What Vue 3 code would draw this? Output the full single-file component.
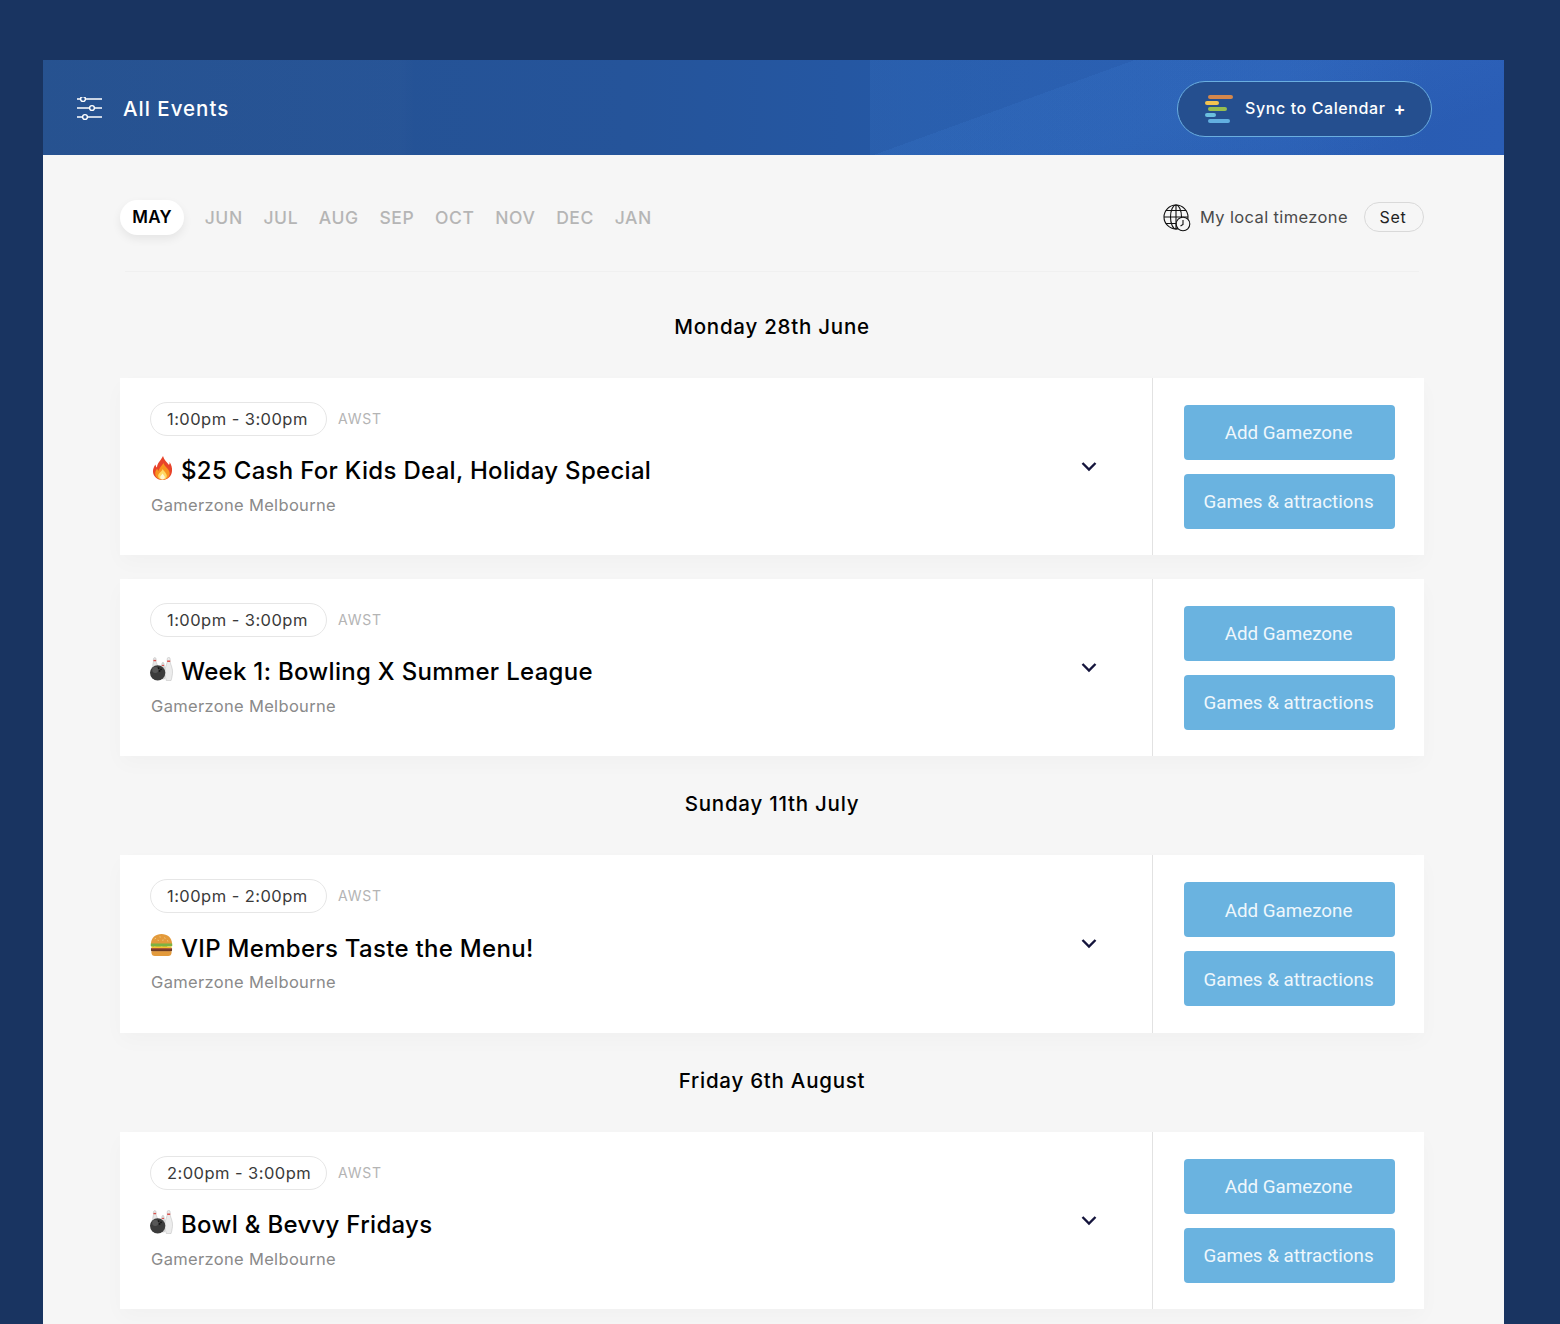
<script setup>
const months = ['JUN', 'JUL', 'AUG', 'SEP', 'OCT', 'NOV', 'DEC', 'JAN']
const groups = [
  { date: 'Monday 28th June', events: [
    { time: '1:00pm - 3:00pm', icon: 'fire', title: '$25 Cash For Kids Deal, Holiday Special' },
    { time: '1:00pm - 3:00pm', icon: 'bowl', title: 'Week 1: Bowling X Summer League' },
  ] },
  { date: 'Sunday 11th July', events: [
    { time: '1:00pm - 2:00pm', icon: 'burger', title: 'VIP Members Taste the Menu!' },
  ] },
  { date: 'Friday 6th August', events: [
    { time: '2:00pm - 3:00pm', icon: 'bowl', title: 'Bowl & Bevvy Fridays' },
  ] },
]
</script>

<template>
  <div class="page">
    <main class="panel">
      <header class="hero">
        <div class="hero-title">
          <svg class="sliders" width="26" height="24" viewBox="0 0 26 24" fill="none" stroke="#fff" stroke-width="1.400">
            <path d="M1 2H4.500M9.500 2H26M1 11H13.500M18.500 11H26M1 20H6.500M11.500 20H26" />
            <circle cx="7" cy="2" r="2.400" />
            <circle cx="16" cy="11" r="2.400" />
            <circle cx="9" cy="20" r="2.400" />
          </svg>
          <h1>All Events</h1>
        </div>
        <button class="sync">
          <span class="bars" aria-hidden="true">
            <i class="bar b1"></i><i class="bar b2"></i><i class="bar b3"></i><i class="bar b4"></i><i class="bar b5"></i>
          </span>
          <span class="sync-label">Sync to Calendar</span>
          <span class="plus">+</span>
        </button>
      </header>

      <section class="content">
        <div class="toolbar">
          <nav class="months">
            <span class="month active">MAY</span>
            <span v-for="m in months" :key="m" class="month">{{ m }}</span>
          </nav>
          <div class="tz">
            <svg width="28" height="28" viewBox="0 0 28 28" fill="none" stroke="#111" stroke-width="1.100">
              <circle cx="13" cy="13" r="12" />
              <ellipse cx="13" cy="13" rx="5.500" ry="12" />
              <path d="M13 1V25M1 13H25M2.800 6.500H23.200M2.800 19.500H23.200" />
              <circle cx="20" cy="20" r="6.800" fill="#f6f6f6" />
              <path d="M20 16V20.500L17.500 22" />
            </svg>
            <span class="tz-label">My local timezone</span>
            <button class="set">Set</button>
          </div>
        </div>
        <div class="rule"></div>

        <div v-for="g in groups" :key="g.date" class="group">
          <h2>{{ g.date }}</h2>
          <article v-for="e in g.events" :key="e.title" class="card">
            <div class="info">
              <div class="details">
                <div class="time-row">
                  <span class="time">{{ e.time }}</span>
                  <span class="zone">AWST</span>
                </div>
                <h3>
                  <svg v-if="e.icon === 'fire'" class="emoji" viewBox="0 0 23 24">
                    <path fill="#e8432a" d="M13 0C14 4 17 6 19 9C19.600 8 19.800 7 19.600 6C21.500 9 22.300 12 22 15C21.600 20.500 17.500 24 12.500 24C7.500 24 3.400 20.500 3 16C2.800 13 4 10.500 5.500 8.500C5.700 10 6.200 11 7 11.500C7 7 11 4.500 13 0Z" />
                    <path fill="#f8931f" d="M13.500 7C14.500 10.500 18.500 12.500 19.500 16C20.500 20 17.500 23.600 12.500 23.600C8 23.600 5 20.800 5.200 17C5.300 15.200 6.200 13.800 7.200 12.800C7.500 13.800 8 14.500 8.800 15C8.800 12 12 10 13.500 7Z" />
                    <path fill="#ffd964" d="M12.800 13C13.800 15.500 16.800 17 16.800 20C16.800 22.300 15 23.600 12.500 23.600C10 23.600 8.200 22.200 8.200 20C8.200 17 11.500 16 12.800 13Z" />
                    <path fill="#fff6cf" d="M12.500 17.500C13.400 19 14.800 19.800 14.800 21.200C14.800 22.600 13.800 23.400 12.500 23.400C11.200 23.400 10.200 22.600 10.200 21.200C10.200 19.800 11.800 19 12.500 17.500Z" />
                  </svg>
                  <svg v-else-if="e.icon === 'bowl'" class="emoji" viewBox="0 0 24 25">
                    <path fill="#dcdcdc" stroke="#aaa" stroke-width=".4" d="M13.500 5.500C14.800 5.500 14.800 8 15 10C15.500 14 16 18 15 23H12C11 18 11.500 14 12 10C12.200 8 12.200 5.500 13.500 5.500Z" />
                    <path fill="#d9534f" d="M12.300 8.200H14.700V9.400H12.300Z" />
                    <path fill="#ececec" stroke="#aaa" stroke-width=".4" d="M19.500 0.300C21.300 0.300 21.300 3 21 5C21.600 8 24 12 23.500 17C23.300 20 22.500 22.500 22 24.500H17C16.500 22.500 15.700 20 15.500 17C15 12 17.500 8 18 5C17.700 3 17.700 0.300 19.500 0.300Z" />
                    <path fill="#d9534f" d="M17.900 3.600H21.100V5.200H17.900Z" />
                    <path fill="#e6e6e6" stroke="#aaa" stroke-width=".4" d="M5 0.500C6.600 0.500 6.700 3 6.300 4.500C6.800 6.500 8 8 8 11L3 11C2.500 8.500 3.300 6.500 3.700 4.500C3.300 3 3.400 0.500 5 0.500Z" />
                    <path fill="#d9534f" d="M3.600 3H6.400V4.400H3.600Z" />
                    <circle cx="8" cy="16.500" r="8" fill="#3b3b3b" />
                    <circle cx="5.500" cy="13.500" r="3.200" fill="#6a6a6a" opacity=".6" />
                    <circle cx="9" cy="11.500" r=".9" fill="#111" /><circle cx="11.500" cy="12.800" r=".9" fill="#111" /><circle cx="10" cy="14.500" r=".9" fill="#111" />
                  </svg>
                  <svg v-else class="emoji" viewBox="0 0 24 24">
                    <path fill="#e39a3b" d="M1 11C1 4 6 0.500 12 0.500C18 0.500 23 4 23 11Z" />
                    <path fill="none" stroke="#f6d79a" stroke-width="1" d="M5 5.500L6 5M10 3.500L11 3.700M15 4.500L16 5M8 7L9 7.200M13 7L14 6.800M18 7.500L19 8" />
                    <path fill="#7cb342" d="M0.800 10.500H23.200V13C21 14.300 19.500 13.200 17.500 14C15 14.800 13 13.500 11 14C8 14.800 6 13.500 4 14C2.500 14.300 1.500 13.800 0.800 13Z" />
                    <path fill="#f9c22e" d="M1.500 13.500H22.500V15.500L14 16.500L11 18L8 16.500L1.500 15.800Z" />
                    <path fill="#6b3a22" d="M1 15.500H23V17.500C23 18.500 22 19 21 19H3C2 19 1 18.500 1 17.500Z" />
                    <path fill="#d9534f" d="M1.500 15.500H22.500V16.500H1.500Z" opacity=".6" />
                    <path fill="#e39a3b" d="M1.500 18.500H22.500V20C22.500 22 21 23.500 19 23.500H5C3 23.500 1.500 22 1.500 20Z" />
                  </svg>
                  <span>{{ e.title }}</span>
                </h3>
                <p class="venue">Gamerzone Melbourne</p>
              </div>
              <svg class="chevron" width="16" height="11" viewBox="0 0 16 11" fill="none" stroke="#14143c" stroke-width="2.400">
                <path d="M1.500 2L8 8.500L14.500 2" />
              </svg>
            </div>
            <div class="actions">
              <button class="cta">Add Gamezone</button>
              <button class="cta">Games &amp; attractions</button>
            </div>
          </article>
        </div>
      </section>
    </main>
  </div>
</template>

<style>
html, body { margin: 0; background: #193461; }
</style>

<style scoped>
* { box-sizing: border-box; }
.page {
  background: #193461;
  padding: 60px 56px 0 43px;
  font-family: Inter, "Liberation Sans", sans-serif;
}
.panel { background: #f6f6f6; }
.hero {
  height: 95px;
  padding: 3px 72px 0 33px;
  display: flex;
  align-items: center;
  justify-content: space-between;
  background:
    linear-gradient(160deg, rgba(70,140,230,0) 63.400%, rgba(70,140,230,.12) 63.400%, rgba(70,140,230,.12) 75%, rgba(70,140,230,0) 92%),
    linear-gradient(90deg, rgba(70,140,230,0) 56.600%, rgba(70,140,230,.14) 56.600%, rgba(70,140,230,.1) 85%, rgba(70,140,230,0) 95%),
    linear-gradient(90deg, rgba(255,255,255,.012) 0, rgba(255,255,255,.012) 24.500%, rgba(255,255,255,0) 25.500%),
    linear-gradient(90deg, #24508f 0%, #25549a 40%, #2558a5 60%, #2a5db5 100%);
}
.hero-title { display: flex; align-items: center; gap: 21px; }
.sliders { display: block; margin-top: -1px; }
h1 {
  margin: -2px 0 0;
  font-size: 20.500px;
  font-weight: 500;
  letter-spacing: 1px;
  color: #fff;
}
.sync {
  width: 255px;
  height: 56px;
  padding: 0 0 0 27px;
  display: flex;
  align-items: center;
  border: 1px solid #6aaee0;
  border-radius: 28px;
  background: #254f8f;
  color: #fff;
  font-family: inherit;
  cursor: pointer;
}
.bars { width: 29px; display: flex; flex-direction: column; gap: 2px; margin-right: 11px; }
.bar { display: block; height: 4px; border-radius: 2px; }
.b1 { width: 25px; margin-left: 3px; background: #d4874c; }
.b2 { width: 14px; background: #f3c350; }
.b3 { width: 19px; margin-left: 3px; background: #96bd50; }
.b4 { width: 11px; background: #6bbfe0; }
.b5 { width: 22px; margin-left: 3px; background: #62afe0; }
.sync-label { margin-top: -2px; font-size: 16px; font-weight: 500; letter-spacing: .6px; white-space: nowrap; }
.plus { margin-left: 8px; margin-top: -1px; font-size: 18px; font-weight: 600; line-height: 1; }

.content { padding: 0 80px 15px 77px; }
.toolbar {
  height: 116px;
  padding-top: 45px;
  display: flex;
  justify-content: space-between;
  align-items: flex-start;
}
.months { display: flex; align-items: center; height: 35px; }
.month {
  margin-left: 20.700px;
  padding-bottom: 1px;
  font-size: 17.500px;
  font-weight: 500;
  letter-spacing: .6px;
  color: #b5b5b5;
}
.month.active {
  margin-left: 0;
  width: 64px;
  height: 35px;
  border-radius: 18px;
  display: flex;
  align-items: center;
  justify-content: center;
  background: #fff;
  color: #000;
  font-size: 17px;
  font-weight: 600;
  letter-spacing: .2px;
  box-shadow: 0 4px 10px rgba(0,0,0,.07);
}
.tz { display: flex; align-items: center; height: 35px; }
.tz-label { margin: -1px 16px 0 9px; font-size: 16.500px; color: #4a4a4a; letter-spacing: .38px; }
.set {
  width: 60px;
  height: 30px;
  margin-top: -1px;
  padding: 0 2px 0 0;
  border: 1px solid #d9d9d9;
  border-radius: 15px;
  background: transparent;
  font-family: inherit;
  font-size: 16px;
  letter-spacing: .7px;
  color: #222;
}
.rule { height: 1px; margin: 0 5px; background: #f0f0f0; }

h2 {
  margin: 0;
  padding: 36px 0 39px;
  line-height: 24px;
  text-align: center;
  font-size: 20.500px;
  font-weight: 500;
  letter-spacing: .75px;
  color: #000;
}
.rule + .group h2 { padding-top: 42.700px; }

.card {
  height: 177.500px;
  display: flex;
  background: #fff;
  box-shadow: 0 8px 20px rgba(0,0,0,.025);
}
.card + .card { margin-top: 23.500px; }
.info {
  width: 1033px;
  padding: 24px 55px 0 30px;
  display: flex;
  justify-content: space-between;
  border-right: 1px solid #e2e2e2;
}
.details { min-width: 0; }
.time-row { display: flex; align-items: center; gap: 11px; }
.time {
  width: 177px;
  height: 34px;
  padding: 0 0 0 16px;
  display: flex;
  align-items: center;
  border: 1px solid #e6e6e6;
  border-radius: 17px;
  font-size: 16.500px;
  letter-spacing: .45px;
  color: #3a3a3a;
  white-space: nowrap;
}
.zone { margin-top: -1px; font-size: 14px; color: #b4b4b4; letter-spacing: .8px; }
h3 {
  margin: 19px 0 0;
  height: 32px;
  display: flex;
  align-items: center;
  gap: 8px;
  font-size: 24px;
  font-weight: 500;
  letter-spacing: .3px;
  color: #000;
  white-space: nowrap;
}
.emoji { width: 23px; height: 24px; margin-top: -6px; flex: none; }
.venue {
  margin: 8px 0 0 1px;
  font-size: 16.500px;
  line-height: 20px;
  letter-spacing: .33px;
  color: #8a8a8a;
}
.chevron { align-self: center; margin-top: -24px; flex: none; }
.actions {
  width: 271px;
  padding: 27px 0 0 31px;
  display: flex;
  flex-direction: column;
  gap: 14px;
}
.cta {
  width: 211px;
  height: 55px;
  padding: 2px 2px 0 0;
  border: 0;
  border-radius: 4px;
  background: #6ab3e0;
  color: #eef7fc;
  font-family: Roboto, "Liberation Sans", sans-serif;
  font-size: 18.800px;
  cursor: pointer;
}
</style>
